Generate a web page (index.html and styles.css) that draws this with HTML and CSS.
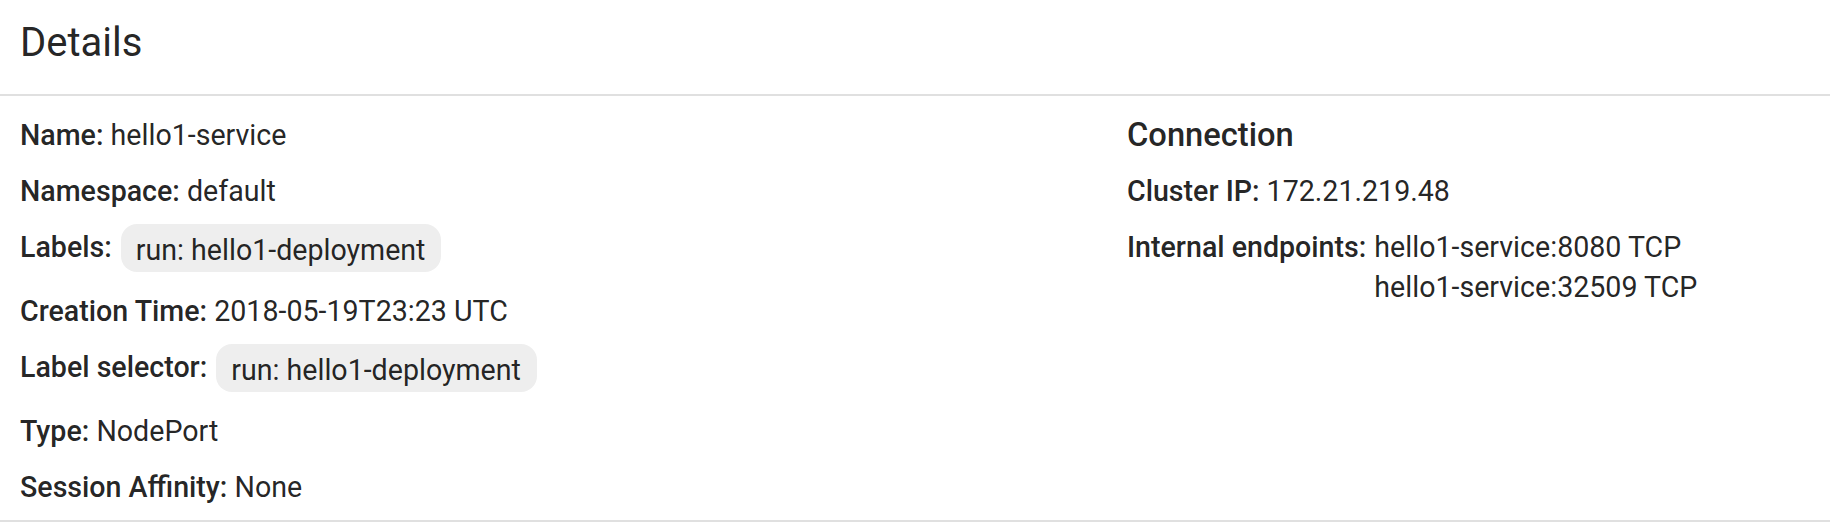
FILE: index.html
```html
<!DOCTYPE html>
<html lang="en">
<head>
<meta charset="utf-8">
<title>Details</title>
<link rel="stylesheet" href="styles.css">
</head>
<body>
<section class="card">
  <header class="card-header">
    <h1 class="card-title">Details</h1>
  </header>
  <div class="card-body">
    <div class="col col-main">
      <div class="row"><span class="key">Name:</span> hello1-service</div>
      <div class="row"><span class="key">Namespace:</span> default</div>
      <div class="row row-chips"><span class="key">Labels:</span><span class="chip">run: hello1-deployment</span></div>
      <div class="row"><span class="key">Creation Time:</span> 2018-05-19T23:23 UTC</div>
      <div class="row row-chips"><span class="key">Label selector:</span><span class="chip">run: hello1-deployment</span></div>
      <div class="row"><span class="key">Type:</span> NodePort</div>
      <div class="row"><span class="key">Session Affinity:</span> None</div>
    </div>
    <div class="col col-side">
      <h2 class="section-title">Connection</h2>
      <div class="row"><span class="key">Cluster IP:</span> 172.21.219.48</div>
      <div class="row row-multi">
        <span class="key">Internal endpoints:</span>
        <div class="values">
          <div>hello1-service:8080 TCP</div>
          <div>hello1-service:32509 TCP</div>
        </div>
      </div>
    </div>
  </div>
</section>
</body>
</html>
```
FILE: styles.css
```css
html, body {
  margin: 0;
  padding: 0;
  background: #ffffff;
}

body {
  font-family: Roboto, "Noto Sans", "Liberation Sans", sans-serif;
  color: rgba(0, 0, 0, 0.87);
  width: 1830px;
  height: 524px;
  overflow: hidden;
}

.card {
  border-bottom: 2px solid #e0e0e0;
}

.card-header {
  height: 96px;
  box-sizing: border-box;
  padding: 19px 20px 0 20px;
  border-bottom: 2px solid #e0e0e0;
}

.card-title {
  margin: 0;
  font-size: 40px;
  line-height: 48px;
  font-weight: 400;
}

.card-body {
  display: grid;
  grid-template-columns: 1107px 1fr;
  padding: 16px 20px 0 20px;
}

.col {
  display: flex;
  flex-direction: column;
}

.row {
  font-size: 28.6px;
  line-height: 40px;
  padding-top: 3px;
  margin-bottom: 13px;
  white-space: nowrap;
}

.key {
  font-weight: 500;
}

.row-chips {
  display: flex;
  align-items: flex-start;
  padding-top: 0;
  margin-bottom: 16px;
}

.row-chips .key {
  padding-top: 3px;
}

.chip {
  display: inline-block;
  height: 43px;
  line-height: 43px;
  padding: 5px 16px 0 15px;
  margin-left: 9px;
  border-radius: 16px;
  background: #eeeeee;
  color: rgba(0, 0, 0, 0.87);
}

.section-title {
  margin: 0 0 13px 0;
  padding-top: 3px;
  font-size: 32.7px;
  line-height: 40px;
  font-weight: 500;
}

.row-multi {
  display: flex;
  align-items: flex-start;
}

.values {
  margin-left: 8px;
}
```
